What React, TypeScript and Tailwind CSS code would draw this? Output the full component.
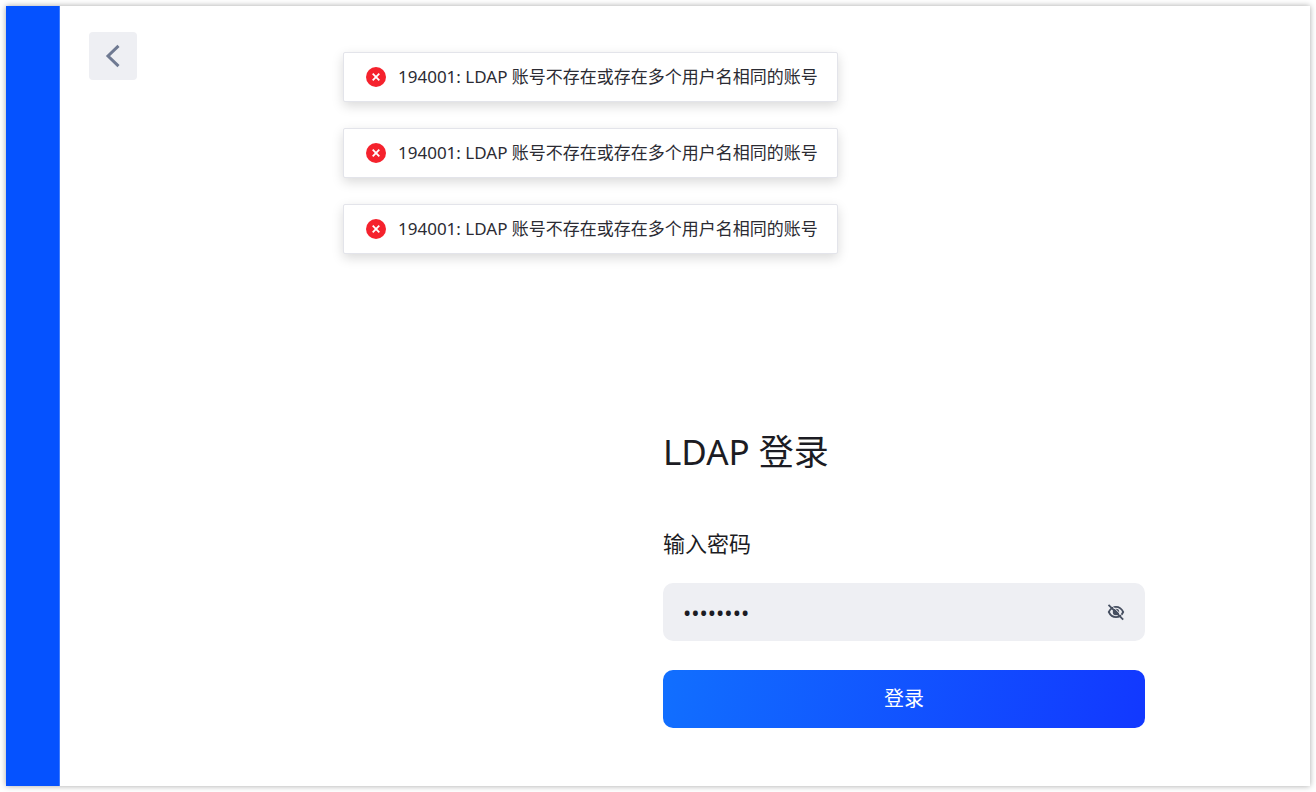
import { useState } from "react";

const messages = [
    { id: 1, text: "194001: LDAP 账号不存在或存在多个用户名相同的账号" },
    { id: 2, text: "194001: LDAP 账号不存在或存在多个用户名相同的账号" },
    { id: 3, text: "194001: LDAP 账号不存在或存在多个用户名相同的账号" },
];

function ErrorIcon() {
    return (
        <svg viewBox="0 0 20 20" className="size-5 shrink-0" aria-hidden="true">
            <circle cx="10" cy="10" r="10" fill="#f5222d" />
            <path d="M6.7 6.7l6.6 6.6M13.3 6.7l-6.6 6.6" stroke="#fff" strokeWidth="1.8" />
        </svg>
    );
}

function EyeIcon({ off }: { off: boolean }) {
    return (
        <svg viewBox="0 0 18 18" className="size-[18px]" fill="none" stroke="#464f60" strokeWidth="1.8" aria-hidden="true">
            <path d="M1.8 9C3.4 5.6 6 3.9 9 3.9s5.6 1.7 7.2 5.1c-1.6 3.4-4.2 5.1-7.2 5.1S3.4 12.4 1.8 9z" />
            <circle cx="9" cy="9" r="2.3" fill="#464f60" />
            {off && (
                <>
                    <path d="M3.5 1.2l13.5 13.5" stroke="#eeeff3" strokeWidth="1" />
                    <path d="M1.5 1.9l14.7 14.7" />
                </>
            )}
        </svg>
    );
}

export default function App() {
    const [password, setPassword] = useState("password");
    const [visible, setVisible] = useState(false);

    return (
        <div className="flex min-h-screen bg-white p-1.5 font-['Noto_Sans','Noto_Sans_CJK_SC',sans-serif] text-[#1c1c23]">
            <div className="relative flex flex-1 bg-white shadow-[0_0_6px_rgba(0,0,0,0.35)]">

                {/* BRAND STRIP */}

                <div className="w-[54px] shrink-0 border-r border-[#3d7bff] bg-[#0552ff]" />

                <main className="flex flex-1 flex-col pt-[26px] pr-[165px] pb-[58px] pl-[29px]">
                    <button
                        type="button"
                        aria-label="返回"
                        className="flex size-12 items-center justify-center rounded-sm bg-[#eeeff3]"
                    >
                        <svg viewBox="0 0 24 24" className="size-6" fill="none" stroke="#6f7a92" strokeWidth="3" aria-hidden="true">
                            <path d="M17.5 1.8L7 12l10.5 10.2" />
                        </svg>
                    </button>

                    <form
                        className="mt-auto ml-auto flex w-full max-w-[482px] flex-col"
                        onSubmit={(e) => e.preventDefault()}
                    >
                        <h1 className="text-[35px] leading-11">LDAP 登录</h1>

                        <label htmlFor="password" className="mt-[53px] text-[22px] leading-8">
                            输入密码
                        </label>

                        <div className="mt-6 flex h-[58px] items-center rounded-[10px] bg-[#eeeff3] px-5">
                            <input
                                id="password"
                                type={visible ? "text" : "password"}
                                value={password}
                                onChange={(e) => setPassword(e.target.value)}
                                className="min-w-0 flex-1 bg-transparent text-[22px] outline-none"
                            />
                            <button
                                type="button"
                                aria-label="显示密码"
                                onClick={() => setVisible(!visible)}
                            >
                                <EyeIcon off={!visible} />
                            </button>
                        </div>

                        <button
                            type="submit"
                            className="mt-[29px] h-[58px] rounded-[10px] bg-linear-[100deg,#116fff,#1238ff] text-xl text-white"
                        >
                            登录
                        </button>
                    </form>
                </main>

                {/* MESSAGES */}

                <div className="absolute top-[46px] left-[337px] flex flex-col gap-[26px]" role="alert">
                    {messages.map((message) => (
                        <div
                            key={message.id}
                            className="flex h-[50px] items-center gap-3 rounded-xs border border-[#e3e4ea] bg-white pr-[19px] pl-[22px] text-[17px] whitespace-nowrap text-[#2b2b33] shadow-[0_4px_12px_rgba(0,0,0,0.15)]"
                        >
                            <ErrorIcon />
                            <span>{message.text}</span>
                        </div>
                    ))}
                </div>
            </div>
        </div>
    );
}
